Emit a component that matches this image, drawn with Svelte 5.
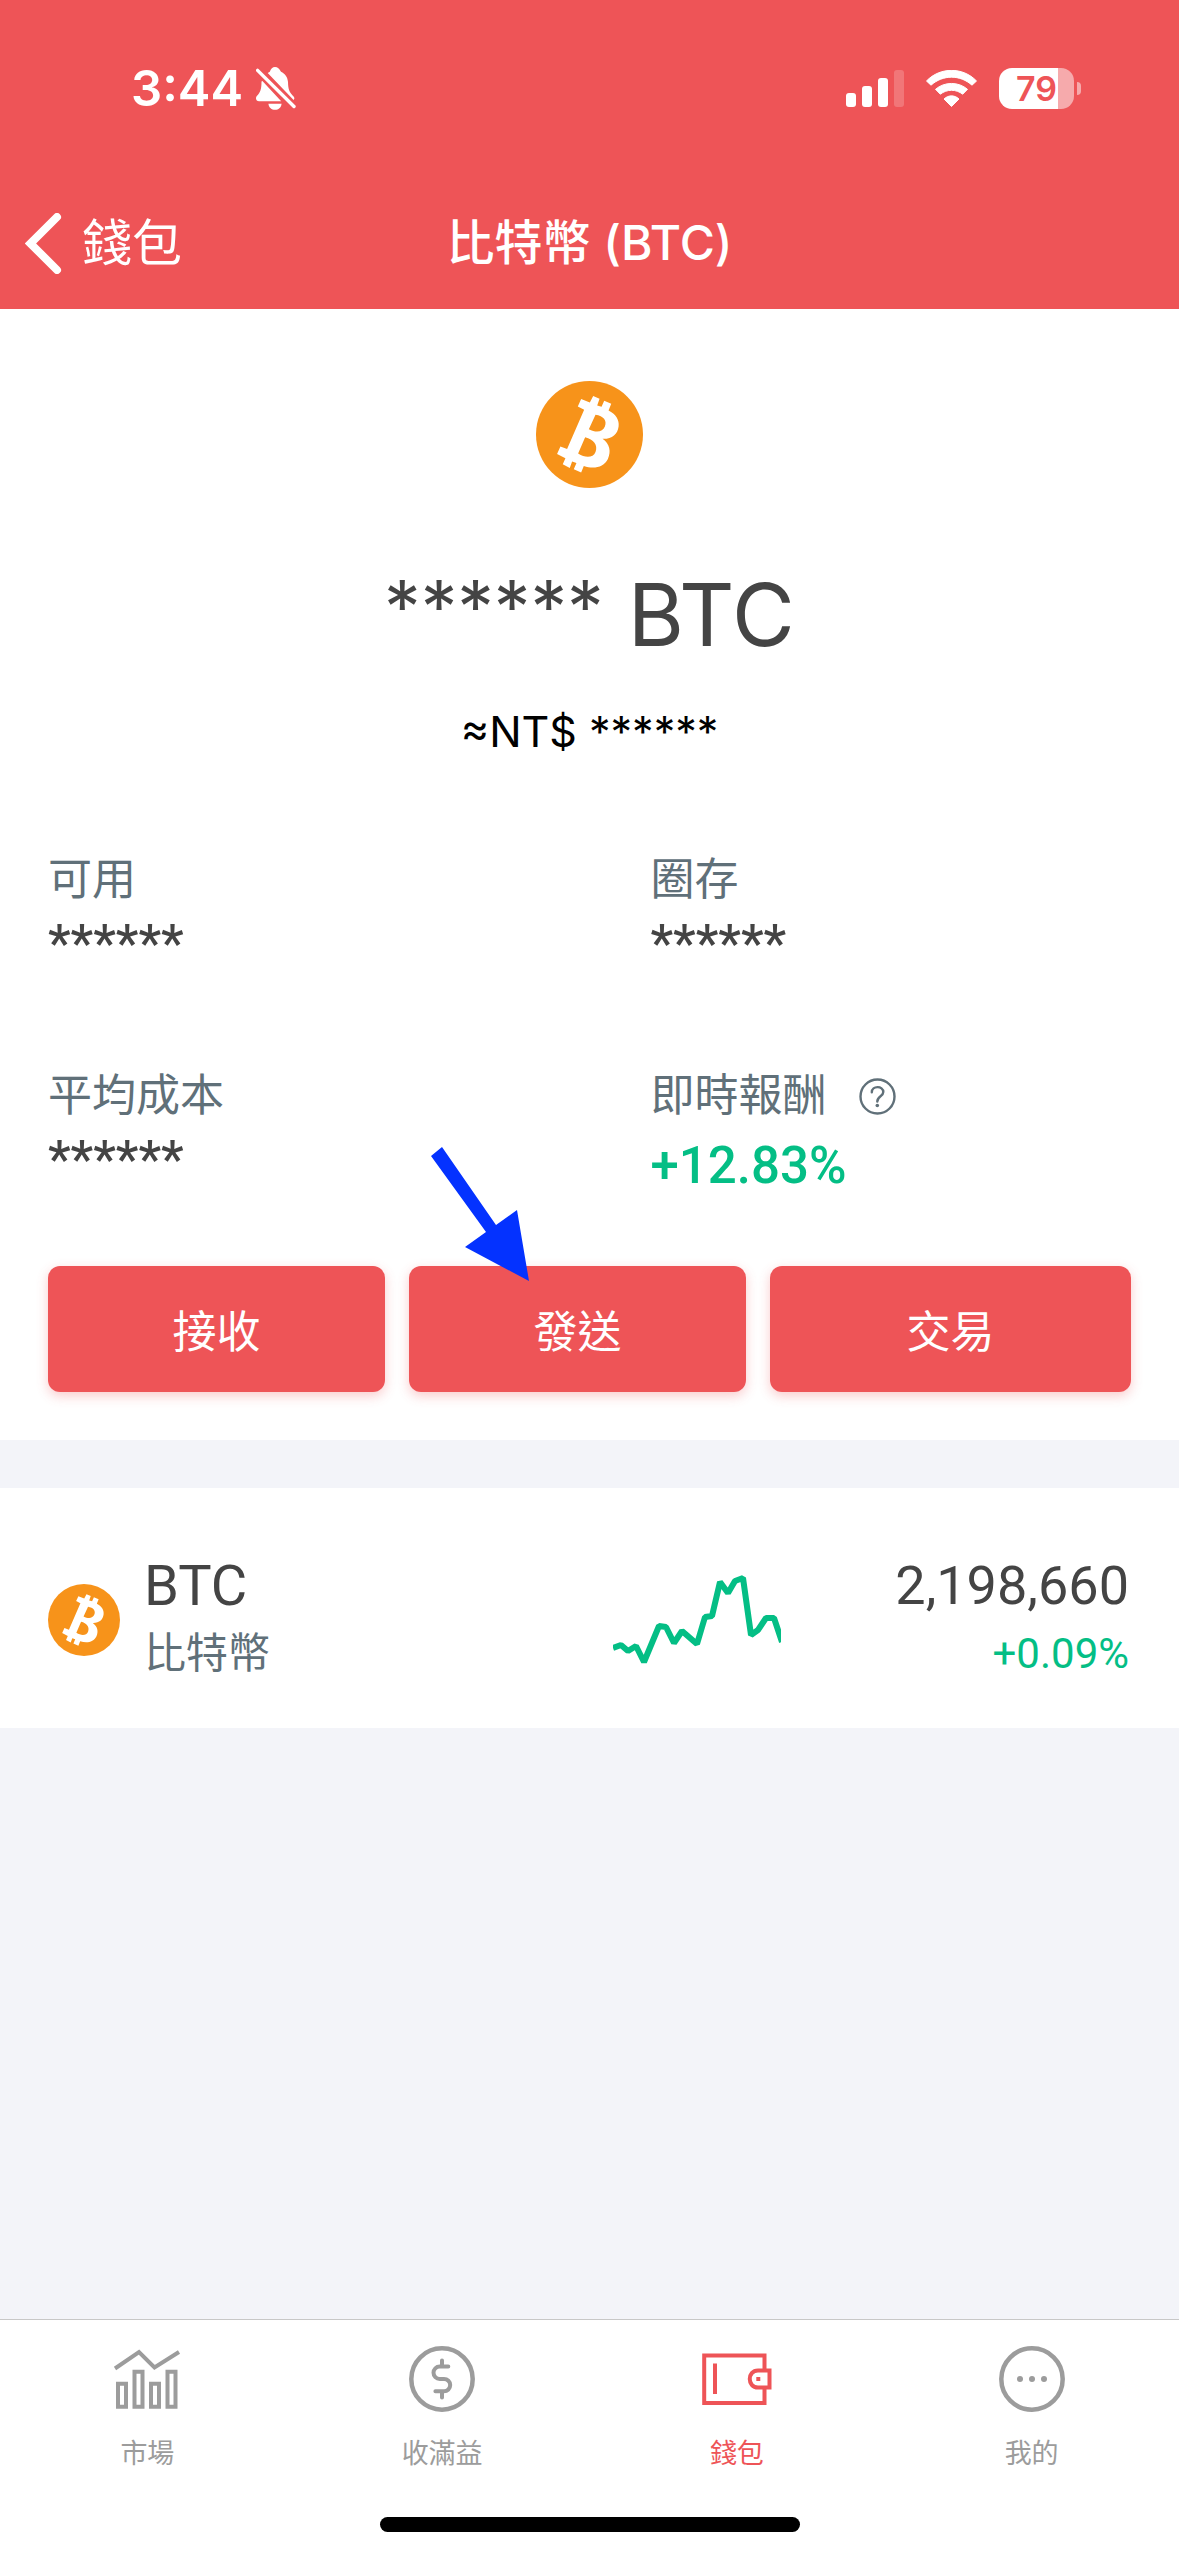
<script lang="ts">
	const mask = "******";

	const stats = [
		{ label: "可用", value: mask },
		{ label: "圈存", value: mask },
		{ label: "平均成本", value: mask },
		{ label: "即時報酬", value: "+12.83%", up: true, help: true },
	];

	const trend = [
		[0, 78], [8, 75], [15, 81], [23, 76], [31, 92], [46, 56], [53, 57],
		[61, 73], [69, 61], [84, 74], [92, 47], [99, 46], [107, 12], [115, 23],
		[122, 11], [130, 8], [138, 65], [145, 60], [153, 48], [161, 48], [169, 72],
	];
	const trendPoints = trend.map((p) => p.join(",")).join(" ");

	const tabs = [
		{ id: "market", label: "市場" },
		{ id: "earn", label: "收滿益" },
		{ id: "wallet", label: "錢包" },
		{ id: "me", label: "我的" },
	];
	let active = $state("wallet");
</script>

{#snippet bitcoin()}
	<svg class="coin" viewBox="590 64 320 320" aria-hidden="true">
		<circle cx="750" cy="224" r="160" fill="#f7931a" />
		<path
			fill="#fff"
			fill-rule="evenodd"
			d="M725 118L751 128L761 109L780 117L773 137L786 141L794 123L815 132L807 152C828 162 840 180 837 200C834 224 817 238 789 237C811 253 815 275 805 297C793 322 763 328 733 318L725 338L703 328L711 309L698 305L691 324L670 313L678 295L653 282L663 260L683 267L734 150L715 140ZM768 165C792 168 803 183 796 200C789 217 770 220 748 208ZM737 232C762 238 776 255 768 276C761 294 738 295 716 281Z"
		/>
	</svg>
{/snippet}

<div class="page">
	<header>
		<div class="status">
			<div class="status-side">
				<span class="time">3:44</span>
				<svg width="40" height="43" viewBox="0 0 40 43" fill="#fff" aria-hidden="true">
					<path d="M11.7 6L13.8 4.8C14.8 1.6 16.6 0 19 0C21.6 0 23.4 1.6 25 4.8C29 6.6 31.6 10 32 15C32.3 22 32.6 24.5 38 30Q39 31.6 37.6 33Z" />
					<path d="M6.4 14L25.2 34.3H3C0 34 -0.8 31 0.8 29C4.5 25.5 5.5 22 5.5 14.5Z" />
					<path d="M12.4 36.7H25.6C25 40.7 22.5 42.7 19 42.7S13 40.7 12.4 36.7Z" />
					<path d="M1.6 3.4L38 39.5" stroke="#fff" stroke-width="3.4" stroke-linecap="round" />
				</svg>
			</div>
			<div class="status-side">
				<svg width="58" height="37" viewBox="0 0 58 37" fill="#fff" aria-hidden="true">
					<rect y="23" width="10" height="14" rx="3" />
					<rect x="16" y="16" width="10" height="21" rx="3" />
					<rect x="32" y="8" width="10" height="29" rx="3" />
					<rect x="48" width="10" height="37" rx="3" opacity="0.2" />
				</svg>
				<svg width="51" height="37" viewBox="0 0 51 37" fill="#fff" stroke="#fff" stroke-linejoin="round" aria-hidden="true">
					<path d="M0.5 11C14 -3.2 37 -3.2 50.5 11L46 15.2C34 4.5 17 4.5 5 15.2Z" />
					<path d="M9.5 19.3C18.5 11.5 32.5 11.5 41.5 19.3L36.7 24.2C30 19 21 19 14.3 24.2Z" />
					<path d="M18 29C22.5 24.8 28.5 24.8 33 29L25.5 36.5Z" />
				</svg>
				<div class="battery"><span>79</span></div>
			</div>
		</div>
		<nav class="bar">
			<a class="back" href="#wallet">
				<svg width="37" height="61" viewBox="0 0 37 61" aria-hidden="true">
					<path d="M32 4L5.5 30.5L32 57" fill="none" stroke="#fff" stroke-width="8" stroke-linecap="round" />
				</svg>
				錢包
			</a>
			<h1>比特幣 (BTC)</h1>
		</nav>
	</header>

	<main>
		<section class="balance">
			<div class="hero">
				{@render bitcoin()}
				<p class="amount"><span>{mask}</span> BTC</p>
				<p class="fiat">≈NT$ {mask}</p>
			</div>

			<dl>
				{#each stats as stat}
					<div>
						<dt>
							{stat.label}
							{#if stat.help}
								<button class="help" aria-label="說明">
									<svg width="37" height="37" viewBox="0 0 37 37" fill="none" stroke="currentColor" stroke-width="2.4">
										<circle cx="18.5" cy="18.5" r="17" />
										<path d="M12.8 14.3C12.8 7.5 24.3 7.5 24.3 14C24.3 18.5 18.3 18 18.3 23.5" stroke-linecap="round" />
										<circle cx="18.3" cy="27.5" r="1.8" fill="currentColor" stroke="none" />
									</svg>
								</button>
							{/if}
						</dt>
						<dd class:up={stat.up}>{stat.value}</dd>
					</div>
				{/each}
			</dl>

			<div class="actions">
				<button>接收</button>
				<div class="pointed">
					<button>發送</button>
					<svg class="arrow" width="98" height="135" viewBox="0 0 98 135" aria-hidden="true">
						<path d="M0 9L11 0L65 78L86 63L98 134L34 100L55 85Z" fill="#0432ff" />
					</svg>
				</div>
				<button>交易</button>
			</div>
		</section>

		<a class="coin-row" href="#btc">
			{@render bitcoin()}
			<div class="name">
				<strong>BTC</strong>
				<span>比特幣</span>
			</div>
			<svg class="trend" width="168" height="100" viewBox="0 0 168 100" aria-hidden="true">
				<polyline points={trendPoints} fill="none" stroke="#04be85" stroke-width="6" stroke-linejoin="bevel" />
			</svg>
			<div class="price">
				<strong>2,198,660</strong>
				<span>+0.09%</span>
			</div>
		</a>
	</main>

	<footer>
		<nav class="tabs">
			{#each tabs as tab}
				<button class:active={active === tab.id} onclick={() => (active = tab.id)}>
					<svg width="70" height="66" viewBox="-2 0 70 66" fill="none" stroke="currentColor" stroke-width="4" aria-hidden="true">
						{#if tab.id === "market"}
							<path d="M1 22.5L25 6L40.5 21.5L65 6" />
							<path d="M4 37.7h8v23h-8zM20.5 25.7h8v35h-8zM37 37.7h8v23h-8zM53.5 25.7h8v35h-8z" />
						{:else if tab.id === "earn"}
							<circle cx="33" cy="33" r="30.7" stroke-width="4.5" />
							<path d="M39.3 20.5H30.7a6.2 6.2 0 0 0 0 12.4H35a6.2 6.2 0 0 1 0 12.4H26.4M33 14.5V20.5M33 45.3V51.5" stroke-linecap="round" />
						{:else if tab.id === "wallet"}
							<path d="M60.5 24V9.5H0.2V57H60.5V42M11 17.5V48" />
							<path d="M65.5 24.5H54C43 24.5 43 41.5 54 41.5H65.5Z" />
							<path d="M52.3 33H56.3" />
						{:else}
							<circle cx="33" cy="33" r="30.7" stroke-width="4.5" />
							<g fill="currentColor" stroke="none">
								<circle cx="21" cy="33" r="3" />
								<circle cx="33" cy="33" r="3" />
								<circle cx="45" cy="33" r="3" />
							</g>
						{/if}
					</svg>
					{tab.label}
				</button>
			{/each}
		</nav>
		<div class="home"></div>
	</footer>
</div>

<style>
	:global(body) {
		background: #f3f4f9;
	}

	.page {
		min-height: 100vh;
		display: flex;
		flex-direction: column;
		font-family: Roboto, "Noto Sans CJK TC", sans-serif;
		color: #444;
	}

	h1,
	p,
	dl,
	dd {
		margin: 0;
	}

	button {
		font: inherit;
		color: inherit;
		background: none;
		border: 0;
		padding: 0;
	}

	a {
		color: inherit;
		text-decoration: none;
	}

	strong {
		font-weight: 400;
	}

	svg {
		display: block;
		flex: none;
	}

	header {
		background: #ee5457;
		color: #fff;
		font-family: Inter, "Noto Sans CJK TC", sans-serif;
	}

	.status {
		height: 177px;
		padding: 0 98px 0 131px;
		display: flex;
		justify-content: space-between;
		align-items: center;
	}

	.status-side {
		display: flex;
		align-items: center;
		gap: 22px;
	}

	.status-side:first-child {
		gap: 13px;
	}

	.time {
		font-size: 49px;
		font-weight: 600;
		line-height: 60px;
	}

	.battery {
		width: 75px;
		height: 41px;
		margin-right: 7px;
		border-radius: 13px;
		position: relative;
		background: linear-gradient(to right, #fff 79%, #f6aaac 79%);
		color: #ee5457;
		font-size: 34px;
		font-weight: 600;
		line-height: 41px;
		text-align: center;
	}

	.battery::after {
		content: "";
		position: absolute;
		top: 14px;
		right: -7px;
		width: 4px;
		height: 13px;
		border-radius: 0 4px 4px 0;
		background: #f6aaac;
	}

	.bar {
		height: 132px;
		padding: 0 25px;
		display: grid;
		grid-template-columns: 1fr auto 1fr;
		align-items: center;
	}

	.back {
		display: flex;
		align-items: center;
		gap: 20px;
		font-size: 50px;
		line-height: 60px;
	}

	h1 {
		font-size: 48px;
		font-weight: 500;
		line-height: 60px;
	}

	.balance {
		background: #fff;
		padding: 72px 48px 48px;
	}

	.hero {
		display: flex;
		flex-direction: column;
		align-items: center;
		font-family: Inter, "Noto Sans CJK TC", sans-serif;
	}

	.hero .coin {
		width: 107px;
		height: 107px;
	}

	.amount {
		margin-top: 75px;
		font-size: 86px;
		line-height: 104px;
	}

	.amount span {
		font-size: 73px;
		line-height: 88px;
		vertical-align: text-top;
	}

	.fiat {
		margin-top: 38px;
		font-size: 43px;
		line-height: 52px;
		color: #000;
	}

	dl {
		margin: 93px 0 60px;
		display: grid;
		grid-template-columns: 1fr 1fr;
		gap: 76px 122px;
	}

	dt {
		display: flex;
		align-items: center;
		gap: 32px;
		font-size: 44px;
		line-height: 60px;
		color: #607079;
	}

	dd {
		min-height: 80px;
		font-size: 51px;
		font-weight: 500;
		line-height: 68px;
	}

	dd.up {
		line-height: 80px;
	}

	.up,
	.price span {
		color: #04be85;
	}

	.actions {
		display: grid;
		grid-template-columns: 337fr 337fr 361fr;
		gap: 24px;
	}

	.actions button {
		width: 100%;
		height: 126px;
		border-radius: 12px;
		background: #ee5457;
		box-shadow: 0 4px 12px rgba(238, 84, 87, 0.3);
		color: #fff;
		font-size: 44px;
	}

	.pointed {
		position: relative;
	}

	.arrow {
		position: absolute;
		left: 22px;
		top: -119px;
		pointer-events: none;
	}

	.coin-row {
		height: 240px;
		margin-top: 48px;
		padding: 24px 50px 0 48px;
		box-sizing: border-box;
		background: #fff;
		display: grid;
		grid-template-columns: 72px 1fr auto 324px;
		column-gap: 24px;
		align-items: center;
	}

	.coin-row .coin {
		width: 72px;
		height: 72px;
	}

	.name,
	.price {
		display: flex;
		flex-direction: column;
		font-size: 42px;
		line-height: 68px;
	}

	.name strong {
		font-size: 56px;
	}

	.name span {
		color: #607079;
	}

	.price {
		align-items: flex-end;
	}

	.price strong {
		font-size: 54px;
	}

	footer {
		margin-top: auto;
		background: #fff;
		border-top: 1px solid #c8c8c8;
		padding-bottom: 24px;
	}

	.tabs {
		display: grid;
		grid-template-columns: repeat(4, 1fr);
		padding-top: 26px;
	}

	.tabs button {
		display: flex;
		flex-direction: column;
		align-items: center;
		gap: 22px;
		font-size: 27px;
		line-height: 40px;
		color: #9c9c9c;
	}

	.tabs .active {
		color: #ee5457;
	}

	.home {
		width: 420px;
		height: 15px;
		margin: 43px auto 0;
		border-radius: 8px;
		background: #000;
	}
</style>
